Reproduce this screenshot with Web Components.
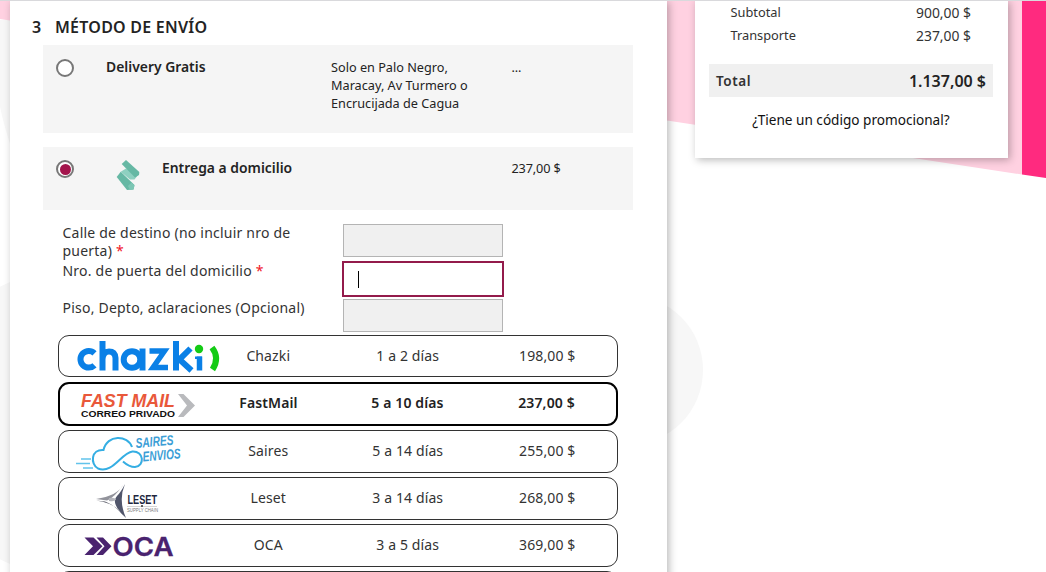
<!DOCTYPE html>
<html lang="es">
<head>
<meta charset="utf-8">
<title>Método de envío</title>
<style>
html,body{margin:0;height:100%;overflow:hidden}
body{background:#fff;font-family:"Noto Sans","Open Sans",sans-serif;color:#232323}
</style>
</head>
<body>
<checkout-page></checkout-page>
<script>
const define = (name, html) => {
  const template = document.createElement('template');
  template.innerHTML = html;
  customElements.define(name, class extends HTMLElement {
    constructor() {
      super();
      this.attachShadow({mode: 'open'}).append(template.content.cloneNode(true));
    }
  });
};

define('page-backdrop', `
<style>:host{display:block;position:absolute;inset:0;z-index:-1}svg{display:block}</style>
<svg width="1046" height="572" viewBox="0 0 1046 572">
  <path d="M0 20H12V150Q4 126 0 107Z" fill="#f7f7f7"/>
  <circle cx="72" cy="423" r="154" fill="#f7f7f7"/>
  <rect x="12" y="200" width="600" height="372" fill="#fff"/>
  <circle cx="628" cy="370" r="75" fill="#f7f7f7"/>
  <path d="M0 0H1022V174.500L667 120.500L0 19Z" fill="#ffd1e1"/>
  <path d="M1022 0H1046V178L1022 174.500Z" fill="#ff2a7f"/>
</svg>`);

define('radio-dot', `
<style>
:host{display:block;box-sizing:border-box;width:18px;height:18px;border:2px solid #777;border-radius:50%;background:#fff;padding:1.500px}
:host([checked])::before{content:"";display:block;width:11px;height:11px;border-radius:50%;background:#a3154c}
</style>`);

define('delivery-option', `
<style>
:host{display:grid;box-sizing:border-box;grid-template-columns:63px 225px 180.500px 1fr;background:#f5f5f5;width:590px;align-items:start;font-size:12.700px;line-height:18px}
.radio{padding:14px 0 0 13px}
.name{display:flex;font-weight:600;font-size:13.900px;padding-top:13px}
.text,.price{padding-top:13px}
.price{letter-spacing:-.15px}
:host([compact]) .radio{padding-top:13px}
:host([compact]) .name,:host([compact]) .price{padding-top:12px}
</style>
<div class="radio"><slot name="radio"></slot></div>
<div class="name"><slot name="icon"></slot><slot></slot></div>
<div class="text"><slot name="text"></slot></div>
<div class="price"><slot name="price"></slot></div>`);

define('zippin-icon', `
<style>:host{display:block;width:56px;height:28px}svg{display:block;overflow:visible}</style>
<svg width="56" height="32" viewBox="0 0 56 32">
  <path d="M14.700 12.700 20 9.500 33.300 14.300 28.500 20.500 24 20.500Z" fill="#8ed0c0"/>
  <path d="M15.700 5 20 1 33.300 13 33 16 29 18.500Z" fill="#66b8a4"/>
  <path d="M10.700 18 14.700 12.700 28.500 26 27.500 30.500 21 31Z" fill="#66b8a4"/>
  <path d="M22 27 25.500 23.500 28.500 26.500 27.500 30.500 24 31Z" fill="#7cc6b4"/>
</svg>`);

define('address-field', `
<style>
:host{display:grid;grid-template-columns:279.500px 162px;font-size:14px;line-height:18px;letter-spacing:.22px;color:#333}
.box{box-sizing:border-box;width:160px;height:33px;margin-left:1px;border:1px solid #b4b4b4;background:#f0f0f0}
:host([active]) .box{width:162px;height:36px;margin-left:0;border:2px solid #931b4b;background:#fff;padding:8px 0 0 14px}
:host([active]) .box::before{content:"";display:block;width:1px;height:17px;background:#000}
.label{width:244px}
:host([active]) .label{padding-top:1px}
:host([required]) .label::after{content:" *";color:#f01528}
</style>
<div class="label"><slot></slot></div><div class="box"></div>`);

define('carrier-row', `
<style>
:host{display:grid;box-sizing:border-box;width:560px;height:43px;border:1px solid #333;border-radius:11px;grid-template-columns:repeat(4,1fr);font-size:14px;line-height:20px;text-align:center;letter-spacing:.12px;color:#333}
:host([selected]){height:44px;border:2px solid #000;font-weight:600;color:#222}
div{padding-top:10px}
:host([selected]) div{padding-top:9px}
.logo{padding:0!important;height:0}
</style>
<div class="logo"><slot name="logo"></slot></div>
<div><slot></slot></div><div><slot name="days"></slot></div><div><slot name="price"></slot></div>`);

const logo = (name, svg) => define(name, `
<style>:host{display:block}svg{display:block;overflow:visible;letter-spacing:0}</style>
<svg width="139" height="41" viewBox="59 0 139 41">${svg}</svg>`);

logo('chazki-logo', `
<g fill="none" stroke="#0a80e6" stroke-width="6">
  <path d="M94.500 17.300A8.300 8.300 0 1 0 94.500 29.300"/>
  <path d="M102.500 5V34.500M102.500 23Q103 15.500 109 15.500T115.500 22V34.500"/>
  <circle cx="132" cy="23.500" r="8.300"/><path d="M142.500 12.500V34.500"/>
  <path d="M149.500 15H164.500L153 31.500H168" stroke-width="5.400"/>
  <path d="M176 5V34.500M190.500 12.500 179.500 23.500 191.500 34.500"/>
  <path d="M199.500 20.500V34.500" stroke-width="5.500"/>
</g>
<path d="M195 20.500H202V23H195Z" fill="#0a80e6"/>
<circle cx="199" cy="13" r="4.200" fill="#14cb16"/>
<path d="M212 11.500Q220 22 212.500 33.500" fill="none" stroke="#14cb16" stroke-width="6"/>`);

logo('fastmail-logo', `
<text x="80" y="22.500" font-family="Liberation Sans, sans-serif" font-size="17.500" font-weight="700" font-style="italic" fill="#e9583a" textLength="94" lengthAdjust="spacingAndGlyphs">FAST MAIL</text>
<text x="80" y="33" font-family="Liberation Sans, sans-serif" font-size="9" font-weight="700" fill="#111" textLength="94" lengthAdjust="spacingAndGlyphs">CORREO PRIVADO</text>
<path d="M177 10H182.500L194 21.500 182.500 33H177L186 21.500Z" fill="#b9babd"/>`);

logo('saires-logo', `
<g fill="none" stroke="#35aee3" stroke-width="2">
<path d="M132 16C128 4 107 3 103.500 19C91 18 90 33 98 37.500C113 43 121 22 132.500 20.500C144 20 145 35 135 36Q129 36 123 30.500"/>
<path d="M81 28H91M76 32.500H90M83 37H93" stroke-width="1.300" stroke="#62c3eb"/></g>
<g font-family="Liberation Sans, sans-serif" font-size="14" font-weight="700" font-style="italic" fill="#3c9ed6">
<text transform="translate(136 17) rotate(-5)" textLength="38" lengthAdjust="spacingAndGlyphs">SAIRES</text>
<text transform="translate(143 30.500) rotate(-5)" textLength="38" lengthAdjust="spacingAndGlyphs">ENVIOS</text></g>`);

logo('leset-logo', `
<path d="M123.500 6.500Q117 18 96 21L107 22.500Q114 20 123.500 6.500Z" fill="#92939b"/>
<path d="M96 22.500Q116 25 124.500 39Q115 27 105 23.500Z" fill="#565864"/>
<path d="M125 6Q118 22 126 40Q110 25 117 18Q121 14 125 6Z" fill="#51566b"/>
<path d="M109 20Q115 19 116 21.500Q115 24 109 23Z" fill="#b5b6bd"/>
<text x="127.500" y="25.700" font-family="Liberation Sans, sans-serif" font-size="13" font-weight="700" fill="#20263e" textLength="29.500" lengthAdjust="spacingAndGlyphs">LESET</text>
<path d="M127 28.500H157" stroke="#aaa" stroke-width=".5"/><circle cx="142" cy="28" r="1" fill="#333"/>
<text x="127" y="33.500" font-family="Liberation Sans, sans-serif" font-size="4.500" fill="#777" textLength="31" lengthAdjust="spacingAndGlyphs">SUPPLY CHAIN</text>`);

logo('oca-logo', `
<path d="M84.500 12.500H93.500L102.500 21.300 93.500 30H84.500L93 21.300ZM96.500 12.500H103L111.500 21.300 103 30H96.500L104.500 21.300Z" fill="#4a236f"/>
<text x="112.500" y="30.500" font-family="Inter, sans-serif" font-size="26" font-weight="600" fill="#4a236f" stroke="#4a236f" stroke-width=".3" textLength="61" lengthAdjust="spacingAndGlyphs">OCA</text>`);

define('shipping-step', `
<style>
:host{display:block;box-sizing:border-box;width:657px;height:580px;background:#fff;box-shadow:2px 2px 8px 0 rgba(0,0,0,.28);padding:16px 0 0 33px}
h1{display:flex;margin:0 0 7px -11px;font-size:16px;line-height:22px;font-weight:600;color:#232323;letter-spacing:.24px}
h1 span{width:23px}
.options{display:grid;gap:14.500px}
.free{height:87.500px}.home{height:63px}
.fields{display:grid;margin:14px 0 0 19.500px;grid-template-rows:37px 38px 36px}
.carriers{display:grid;gap:4px;margin-left:15px}
carrier-row:first-child{height:42px;margin-bottom:1px}
</style>
<h1><span>3</span>MÉTODO DE ENVÍO</h1>
<div class="options">
<delivery-option class="free"><radio-dot slot="radio"></radio-dot>Delivery Gratis<span slot="text">Solo en Palo Negro,<br>Maracay, Av Turmero o<br>Encrucijada de Cagua</span><span slot="price">...</span></delivery-option>
<delivery-option class="home" compact><radio-dot slot="radio" checked></radio-dot><zippin-icon slot="icon"></zippin-icon>Entrega a domicilio<span slot="price">237,00 $</span></delivery-option>
</div>
<div class="fields">
<address-field required>Calle de destino (no incluir nro de puerta)</address-field>
<address-field required active>Nro. de puerta del domicilio</address-field>
<address-field>Piso, Depto, aclaraciones (Opcional)</address-field>
</div>
<div class="carriers">
<carrier-row><chazki-logo slot="logo"></chazki-logo>Chazki<span slot="days">1 a 2 días</span><span slot="price">198,00 $</span></carrier-row>
<carrier-row selected><fastmail-logo slot="logo"></fastmail-logo>FastMail<span slot="days">5 a 10 días</span><span slot="price">237,00 $</span></carrier-row>
<carrier-row><saires-logo slot="logo"></saires-logo>Saires<span slot="days">5 a 14 días</span><span slot="price">255,00 $</span></carrier-row>
<carrier-row><leset-logo slot="logo"></leset-logo>Leset<span slot="days">3 a 14 días</span><span slot="price">268,00 $</span></carrier-row>
<carrier-row><oca-logo slot="logo"></oca-logo>OCA<span slot="days">3 a 5 días</span><span slot="price">369,00 $</span></carrier-row>
<carrier-row></carrier-row>
</div>`);

define('order-summary', `
<style>
:host{display:block;box-sizing:border-box;width:313px;height:158px;background:#fff;box-shadow:2px 2px 8px 0 rgba(0,0,0,.28);padding:1px 15px 0 14px;font-size:13.900px}
.line{display:flex;justify-content:space-between;padding:0 22px 0 21.500px;line-height:23px;color:#333}
.line span:first-child{font-size:12.800px}
.total{display:flex;justify-content:space-between;align-items:center;box-sizing:border-box;height:33px;margin-top:17px;padding:0 7px;background:#f0f0f0;font-weight:600;font-size:16px}
.total span:first-child{font-size:13.500px;color:#333;letter-spacing:.6px}
.promo{margin-top:13px;text-align:center;line-height:20px;font-size:13.600px;color:#111}
</style>
<div class="line"><span>Subtotal</span><span>900,00 $</span></div>
<div class="line"><span>Transporte</span><span>237,00 $</span></div>
<div class="total"><span>Total</span><span>1.137,00 $</span></div>
<div class="promo">¿Tiene un código promocional?</div>`);

define('checkout-page', `
<style>
:host{display:grid;position:relative;z-index:0;box-sizing:border-box;width:1046px;height:572px;overflow:hidden;grid-template-columns:657px 313px;column-gap:28px;padding-left:10px;align-items:start}
.edge{position:absolute;inset:0 0 auto;height:1px;background:#d9d9dc}
</style>
<page-backdrop></page-backdrop>
<shipping-step></shipping-step>
<order-summary></order-summary>
<div class="edge"></div>`);
</script>
</body>
</html>
